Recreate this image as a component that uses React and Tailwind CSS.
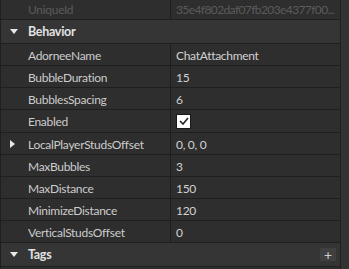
const rows = [
    { name: "AdorneeName", value: "ChatAttachment" },
    { name: "BubbleDuration", value: "15" },
    { name: "BubblesSpacing", value: "6" },
    { name: "Enabled", check: true },
    { name: "LocalPlayerStudsOffset", value: "0, 0, 0", expand: true },
    { name: "MaxBubbles", value: "3" },
    { name: "MaxDistance", value: "150" },
    { name: "MinimizeDistance", value: "120" },
    { name: "VerticalStudsOffset", value: "0" },
];

function DownArrow() {
    return (
        <svg width="8" height="5" viewBox="0 0 8 5" className="shrink-0">
            <path d="M0 0 H8 L4 5 Z" fill="#e8e8e8" />
        </svg>
    );
}

function RightArrow() {
    return (
        <svg width="5" height="8" viewBox="0 0 5 8" className="shrink-0">
            <path d="M0 0 V8 L5 4 Z" fill="#e8e8e8" />
        </svg>
    );
}

function Header({ title, plus }) {
    return (
        <div className="flex h-[24px] items-center border-b border-[#1f1f1f] bg-[#353535] pl-[9px] pr-[4px]">
            <DownArrow />
            <span className="ml-[10px] pt-[2px] text-[12.5px] font-bold text-[#e2e2e2]">{title}</span>
            {plus && (
                <div className="ml-auto flex h-[13px] w-[16px] items-center justify-center bg-[#404040] text-[14px] leading-none text-[#d0d0d0]">
                    +
                </div>
            )}
        </div>
    );
}

function Row({ name, value, check, expand, dim }) {
    return (
        <div className={`flex border-b border-[#1f1f1f] ${check ? "h-[23px]" : "h-[22px]"}`}>
            <div className="flex w-[170px] shrink-0 items-center border-r border-[#1f1f1f] pl-[9px]">
                <div className="w-[18px]">{expand && <RightArrow />}</div>
                <span className={`pt-[2px] ${dim ? "text-[#5b5b5b]" : "text-[#cccccc]"}`}>{name}</span>
            </div>
            <div className="flex min-w-0 flex-1 items-center pl-[5px]">
                {check ? (
                    <div className="flex h-[15px] w-[15px] items-center justify-center border border-[#1a1a1a] bg-white">
                        <svg width="10" height="8" viewBox="0 0 10 8">
                            <path d="M1 4 L4 7 L9 1" fill="none" stroke="#222" strokeWidth="1.6" />
                        </svg>
                    </div>
                ) : (
                    <span className={`whitespace-nowrap pt-[2px] ${dim ? "tracking-[-0.6px] text-[#5b5b5b]" : "text-[#d2d2d2]"}`}>{value}</span>
                )}
            </div>
        </div>
    );
}

export default function App() {
    return (
        <div className="flex h-[269px] w-[349px] overflow-hidden bg-[#2e2e2e] font-['Lato','Liberation_Sans',sans-serif] text-[12px] tracking-[-0.3px]">
            <div className="w-[341px] shrink-0 border-l border-r border-[#1f1f1f]">
                <div className="-mt-[2px]">
                    <Row name="UniqueId" value="35e4f802daf07fb203e4377f00..." dim />
                    <Header title="Behavior" />
                    {rows.map((r) => (
                        <Row key={r.name} {...r} />
                    ))}
                    <Header title="Tags" plus />
                </div>
            </div>
            <div className="flex-1 bg-[#333333]" />
        </div>
    );
}
